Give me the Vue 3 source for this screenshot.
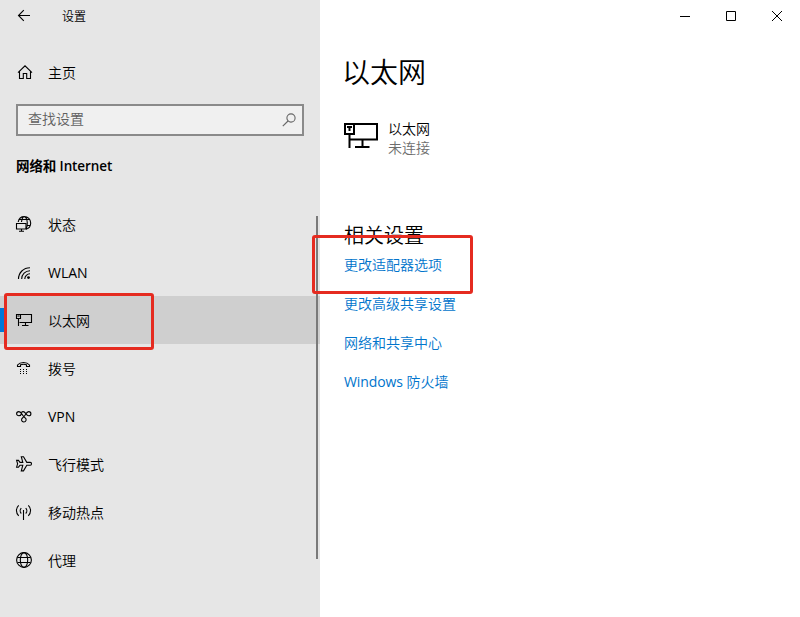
<script setup>
const items = [
  { id: 'status', label: '状态' },
  { id: 'wlan', label: 'WLAN', latin: true },
  { id: 'ethernet', label: '以太网', active: true },
  { id: 'dial', label: '拨号' },
  { id: 'vpn', label: 'VPN', latin: true },
  { id: 'plane', label: '飞行模式' },
  { id: 'hotspot', label: '移动热点' },
  { id: 'proxy', label: '代理' },
]
const links = [
  { text: '更改适配器选项' },
  { text: '更改高级共享设置' },
  { text: '网络和共享中心' },
  { latin: 'Windows', text: ' 防火墙' },
]
</script>

<template>
  <div class="window">
    <aside class="sidebar">
      <header class="titlebar">
        <svg class="icon" viewBox="0 0 16 16"><path d="M14 7.5H2.5M7.8 2.2L2.5 7.5l5.3 5.3" /></svg>
        <span class="app-name">设置</span>
      </header>
      <div class="home">
        <svg class="icon" viewBox="0 0 16 16"><path d="M2 8.7L9 1.8l7 6.900M3.500 7.500v7h3.800v-5h3.400v5h3.800v-7" /></svg>
        <span>主页</span>
      </div>
      <div class="search">
        <span>查找设置</span>
        <svg class="icon" viewBox="0 0 16 16"><circle cx="10" cy="6" r="4.1" /><path d="M7 9l-5.200 5.200" /></svg>
      </div>
      <h2 class="category">网络和 Internet</h2>
      <nav class="menu">
        <a v-for="item in items" :key="item.id" class="item" :class="{ active: item.active }">
          <svg class="icon" viewBox="0 0 16 16">
            <template v-if="item.id === 'status'">
              <path d="M2.200 6C2.800 2.800 5.200.6 8.300.6a6.400 6.400 0 0 1 6.400 6.400c0 3-2 5.500-4.700 6.200M5.500 6C5.900 2.800 6.800.6 8.300.6s3 2.800 3 6.400c0 2.800-.6 5-1.300 5.900M2.800 3.500h11M11 9.500h3.300" />
              <path d="M.5 7.500h9.500v5.500H.5zM5.500 13v2M3 15.300h5" />
            </template>
            <template v-else-if="item.id === 'wlan'">
              <path d="M2.500 15C2.500 8.700 7.500 3.700 14 3.700M5.700 15c0-4.600 3.600-8.200 8.300-8.200M8.800 15c0-2.800 2.400-5.200 5.200-5.200" />
              <circle class="solid" cx="12.500" cy="13.600" r="1.400" />
            </template>
            <template v-else-if="item.id === 'ethernet'">
              <path d="M4.500 2.500h11v8h-12M.5 2.500h4v4h-4zM2.500 6.500v7.500M9.500 10.500v3M6 13.500h6.500M1.500 4h2" />
            </template>
            <template v-else-if="item.id === 'dial'">
              <path d="M1.500 6.500V5C4.300 1.600 10.700 1.600 13.500 5v1.500h-3V4.800c-1.700-.7-4.300-.7-6 0v1.700z" />
              <path class="dots" d="M4 9.500h1m2 0h1m2 0h1M4 11.500h1m2 0h1m2 0h1M4 13.500h1m2 0h1m2 0h1" />
            </template>
            <template v-else-if="item.id === 'vpn'">
              <path d="M5.400 6C5 7.200 3.900 7.800 2.900 7.800 1.600 7.800.6 6.900.6 5.700s1-2.100 2.300-2.100c3 0 3.200 4.600 6.100 6.200 2.200 1.300 1 4.200-1.200 4.200-2.400 0-3.100-2.800-1.100-4.200C9.600 8 9.900 3.600 12.700 3.600c1.300 0 2.200.9 2.200 2.100s-.9 2.100-2.200 2.100c-2.700 0-3-4.200-5.500-4.200-.8 0-1.400.4-1.700 1" />
            </template>
            <template v-else-if="item.id === 'plane'">
              <path d="M5.300.7h2.200l3.300 5.700h3.500c1.600 0 1.600 2.800 0 2.800h-3.500l-3.300 5.700H5.300l1.500-5.700H4l-1.500 2H.6l1-3.400-1-3.400h1.900l1.500 2h2.800z" />
            </template>
            <template v-else-if="item.id === 'hotspot'">
              <path d="M7.500 6v10M5.300 4.200c-1.500 1.500-1.500 3.800 0 5.300M9.700 4.200c1.500 1.500 1.500 3.800 0 5.300M2.700 1.300C-.3 4-.3 9 2.700 11.800M12.300 1.300c3 2.700 3 7.700 0 10.500" />
            </template>
            <template v-else>
              <circle cx="8" cy="8" r="7.400" />
              <ellipse cx="8" cy="8" rx="3.700" ry="7.400" />
              <path d="M1.500 5.500h13M1.500 10.500h13" />
            </template>
          </svg>
          <span :class="{ latin: item.latin }">{{ item.label }}</span>
        </a>
      </nav>
      <div class="scrollbar"></div>
    </aside>

    <main class="content">
      <div class="controls">
        <svg viewBox="0 0 10 10"><path d="M0 5.500h10" /></svg>
        <svg viewBox="0 0 10 10"><path d="M.5.5h9v9h-9z" /></svg>
        <svg viewBox="0 0 10 10"><path d="M0 0l10 10M10 0L0 10" /></svg>
      </div>
      <h1 class="title">以太网</h1>
      <div class="device">
        <svg class="device-icon" viewBox="0 0 34 27">
          <path d="M10 2h23v15.500H6M1 2h9v10H1zM5.500 12V26M18.500 17.500V25M11 25h14.500M3 5h5M5.500 5v4" />
        </svg>
        <div class="device-text">
          <div>以太网</div>
          <div class="muted">未连接</div>
        </div>
      </div>
      <h3 class="related">相关设置</h3>
      <div class="links">
        <a v-for="link in links" :key="link.text"><span v-if="link.latin" class="latin tight">{{ link.latin }}</span>{{ link.text }}</a>
      </div>
    </main>

    <div class="mark mark-menu"></div>
    <div class="mark mark-link"></div>
  </div>
</template>

<style>
body { margin: 0; background: #fff; }
</style>

<style scoped>
.window {
  position: relative;
  display: flex;
  width: 800px;
  height: 617px;
  overflow: hidden;
  background: #fff;
  color: #000;
  font: 350 14px/20px "Open Sans", "Noto Sans CJK SC", sans-serif;
}
.latin { font-weight: 400; }
.tight { letter-spacing: -0.1px; }
.sidebar {
  position: relative;
  box-sizing: border-box;
  width: 320px;
  height: 617px;
  background: #e6e6e6;
}
.icon {
  flex: none;
  width: 16px;
  height: 16px;
  fill: none;
  stroke: #000;
  stroke-width: 1.1;
  overflow: visible;
}
.solid { fill: #000; stroke: none; }
.dots { stroke-width: 1; }
.titlebar {
  display: flex;
  align-items: center;
  gap: 30px;
  height: 32px;
  padding-left: 16px;
}
.app-name { padding-top: 2px; font-size: 12px; }
.home {
  display: flex;
  align-items: center;
  gap: 16px;
  height: 48px;
  margin-top: 16px;
  padding-left: 16px;
}
.home span { padding-top: 2px; }
.search {
  display: flex;
  align-items: center;
  justify-content: space-between;
  box-sizing: border-box;
  width: 288px;
  height: 32px;
  margin: 8px 0 0 16px;
  padding: 0 5px 2px 10px;
  border: 2px solid #8a8a8a;
  background: #f0f0f0;
  color: #606060;
}
.search .icon { stroke: #666; margin-top: 2px; }
.category {
  margin: 20px 0 24px 16px;
  font-size: 13.500px;
  line-height: 20px;
  font-weight: 600;
  letter-spacing: -0.1px;
}
.item {
  display: flex;
  align-items: center;
  gap: 16px;
  box-sizing: border-box;
  height: 48px;
  padding-left: 16px;
}
.item span { padding-top: 1px; }
.active {
  background: linear-gradient(#0078d7, #0078d7) 0 12px / 4px 24px no-repeat #cfcfcf;
}
.scrollbar {
  position: absolute;
  left: 316px;
  top: 216px;
  width: 2px;
  height: 343px;
  background: #7a7a7a;
}
.content {
  flex: 1;
  padding-left: 24px;
}
.controls {
  display: flex;
  justify-content: flex-end;
  align-items: center;
  gap: 36px;
  height: 32px;
  padding-right: 18px;
}
.controls svg {
  width: 10px;
  height: 10px;
  fill: none;
  stroke: #000;
  stroke-width: 1;
}
.title {
  margin: 20px 0 0 -2px;
  font-size: 28px;
  line-height: 40px;
  font-weight: 350;
}
.device {
  display: flex;
  gap: 10px;
  height: 38px;
  margin-top: 27px;
}
.device-icon {
  width: 34px;
  height: 27px;
  margin-top: 3px;
  fill: none;
  stroke: #000;
  stroke-width: 2;
}
.device-text { line-height: 19px; }
.muted { color: #6d6d6d; }
.related {
  margin: 69px 0 0;
  font-size: 20px;
  line-height: 20px;
  font-weight: 350;
}
.links {
  display: flex;
  flex-direction: column;
  gap: 19px;
  margin-top: 9px;
  color: #0074cc;
}
.mark {
  position: absolute;
  box-sizing: border-box;
  border: 3px solid #e52b20;
  border-radius: 3px;
}
.mark-menu { left: 4px; top: 293px; width: 150px; height: 57px; }
.mark-link { left: 312px; top: 235px; width: 161px; height: 59px; }
</style>
